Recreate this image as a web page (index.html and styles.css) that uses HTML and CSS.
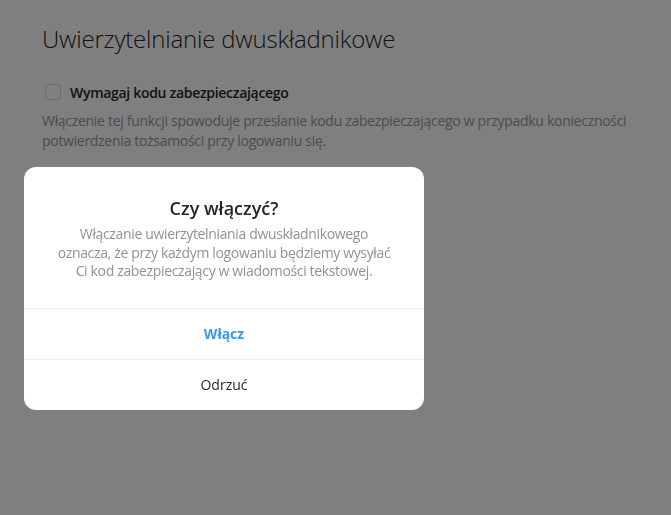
FILE: index.html
```html
<!DOCTYPE html>
<html lang="pl">
<head>
<meta charset="utf-8">
<title>Uwierzytelnianie dwuskładnikowe</title>
<link rel="stylesheet" href="styles.css">
</head>
<body>
<main class="page">
  <h1 class="page-title">Uwierzytelnianie dwuskładnikowe</h1>
  <label class="check-row">
    <span class="checkbox"></span>
    <span class="check-label">Wymagaj kodu zabezpieczającego</span>
  </label>
  <p class="help">Włączenie tej funkcji spowoduje przesłanie kodu zabezpieczającego w przypadku konieczności potwierdzenia tożsamości przy logowaniu się.</p>
</main>
<div class="overlay">
  <div class="modal" role="dialog">
    <div class="modal-body">
      <h3 class="modal-title">Czy włączyć?</h3>
      <p class="modal-text">Włączanie uwierzytelniania dwuskładnikowego<br>oznacza, że przy każdym logowaniu będziemy wysyłać<br>Ci kod zabezpieczający w wiadomości tekstowej.</p>
    </div>
    <button class="modal-btn primary">Włącz</button>
    <button class="modal-btn">Odrzuć</button>
  </div>
</div>
</body>
</html>
```
FILE: styles.css
```css
html, body {
  margin: 0;
  padding: 0;
  background: #fff;
  font-family: "Open Sans", "Noto Sans", sans-serif;
  color: #262626;
}
.page {
  padding: 20px 0 0 42px;
}
.page-title {
  margin: 0;
  font-size: 24px;
  font-weight: 300;
  line-height: 38px;
  letter-spacing: -0.2px;
}
.check-row {
  display: flex;
  align-items: center;
  gap: 9px;
  margin-top: 24px;
  padding-left: 3px;
  height: 20px;
}
.checkbox {
  width: 14px;
  height: 14px;
  border: 1px solid #dbdbdb;
  border-radius: 3px;
  background: #fff;
}
.check-label {
  font-size: 14px;
  font-weight: 600;
  letter-spacing: -0.3px;
}
.help {
  margin: 9px 0 0;
  width: 600px;
  font-size: 14px;
  line-height: 20px;
  color: #999;
  letter-spacing: -0.3px;
}
.overlay {
  position: fixed;
  inset: 0;
  background: rgba(0, 0, 0, 0.5);
  display: flex;
  align-items: flex-start;
  padding: 167px 0 0 24px;
}
.modal {
  width: 400px;
  background: #fff;
  border-radius: 12px;
  display: flex;
  flex-direction: column;
  overflow: hidden;
}
.modal-body {
  padding: 29px 16px 27px;
  text-align: center;
}
.modal-title {
  margin: 0;
  font-size: 18px;
  font-weight: 600;
  line-height: 24px;
}
.modal-text {
  margin: 5px 0 0;
  font-size: 14px;
  line-height: 18.5px;
  color: #929292;
  letter-spacing: -0.35px;
  white-space: nowrap;
}
.modal-btn {
  height: 51px;
  box-sizing: border-box;
  border: 0;
  border-top: 1px solid #efefef;
  background: none;
  font-family: inherit;
  font-size: 14px;
  color: #262626;
  padding: 0;
}
.modal-btn.primary {
  color: #3897f0;
  font-weight: 700;
}
```
